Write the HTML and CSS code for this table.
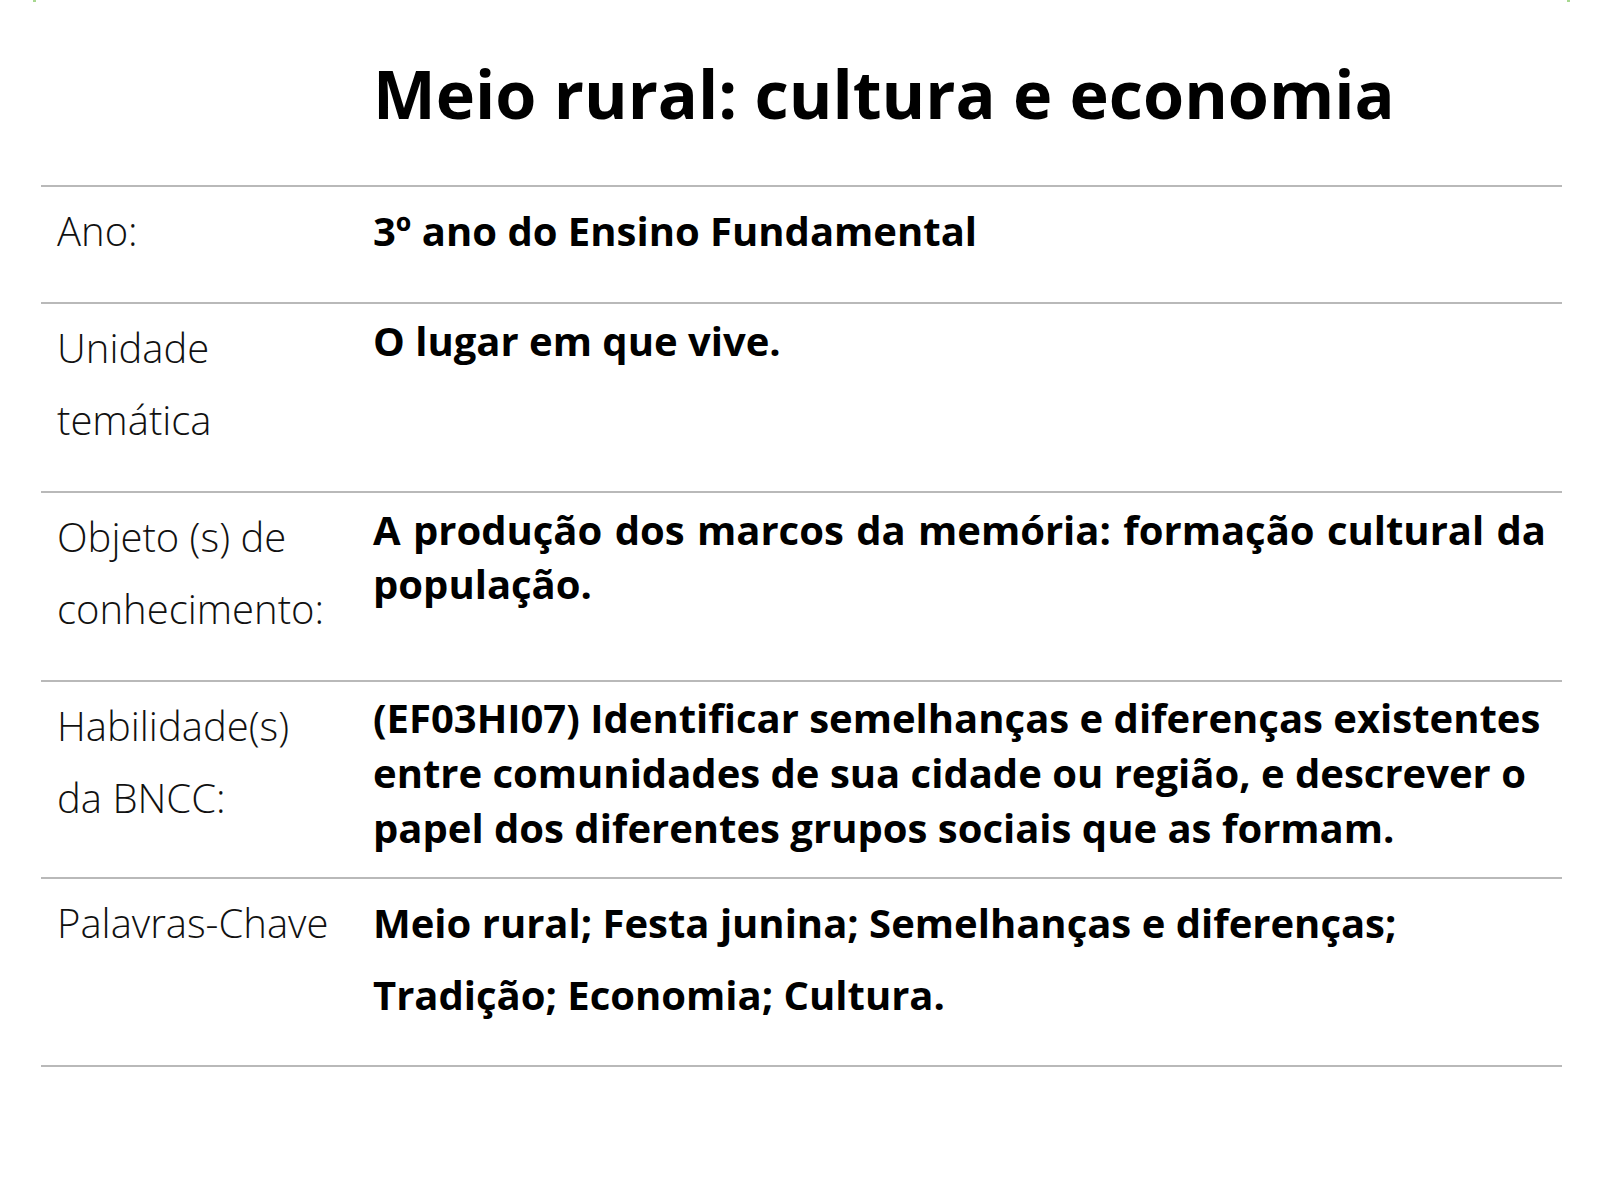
FILE: index.html
```html
<!DOCTYPE html>
<html lang="pt-BR">
<head>
<meta charset="utf-8">
<title>Meio rural: cultura e economia</title>
<link rel="stylesheet" href="styles.css">
</head>
<body>
<div class="page">
  <span class="mark mark-left"></span>
  <span class="mark mark-right"></span>
  <h1 class="title">Meio rural: cultura e economia</h1>
  <div class="table">
    <div class="row">
      <div class="label">Ano:</div>
      <div class="value value-tall">3º ano do Ensino Fundamental</div>
    </div>
    <div class="row">
      <div class="label">Unidade<br>temática</div>
      <div class="value value-low">O lugar em que vive.</div>
    </div>
    <div class="row">
      <div class="label">Objeto (s) de<br>conhecimento:</div>
      <div class="value value-low value-justify">A produção dos marcos da memória: formação cultural da população.</div>
    </div>
    <div class="row row-skill">
      <div class="label">Habilidade(s)<br>da BNCC:</div>
      <div class="value">(EF03HI07) Identificar semelhanças e diferenças existentes entre comunidades de sua cidade ou região, e descrever o papel dos diferentes grupos sociais que as formam.</div>
    </div>
    <div class="row row-last">
      <div class="label">Palavras-Chave</div>
      <div class="value value-tall">Meio rural; Festa junina; Semelhanças e diferenças; Tradição; Economia; Cultura.</div>
    </div>
  </div>
</div>
</body>
</html>
```
FILE: styles.css
```css
* { box-sizing: border-box; }
html, body { margin: 0; padding: 0; background: #fff; }
body {
  font-family: "Open Sans", "Noto Sans", sans-serif;
  color: #000;
  width: 1600px;
  height: 1200px;
  overflow: hidden;
}
.page {
  position: relative;
  padding: 0 38px 0 41px;
}
.mark {
  position: absolute;
  top: 0;
  width: 3px;
  height: 2px;
  background: #a8d890;
}
.mark-left { left: 33px; }
.mark-right { left: 1567px; }
.title {
  margin: 0 0 52px 332px;
  padding-top: 53px;
  font-size: 66.5px;
  font-weight: 700;
  line-height: 80px;
  letter-spacing: 0;
}
.table {
  border-bottom: 2px solid #b9b9b9;
}
.row {
  display: grid;
  grid-template-columns: 332px 1fr;
  border-top: 2px solid #b9b9b9;
  padding: 8px 10px 35px 0;
}
.row-skill { padding-bottom: 22px; }
.row-last { padding-bottom: 34px; }
.label {
  padding-left: 16px;
  font-size: 40px;
  font-weight: 300;
  line-height: 72px;
  color: #111;
}
.value {
  font-size: 40px;
  font-weight: 700;
  line-height: 54px;
}
.value-low { padding-top: 2px; }
.value-justify {
  text-align: justify;
  padding-right: 6px;
}
.row-skill .value { line-height: 55px; }
.value-tall { line-height: 72px; }
```
